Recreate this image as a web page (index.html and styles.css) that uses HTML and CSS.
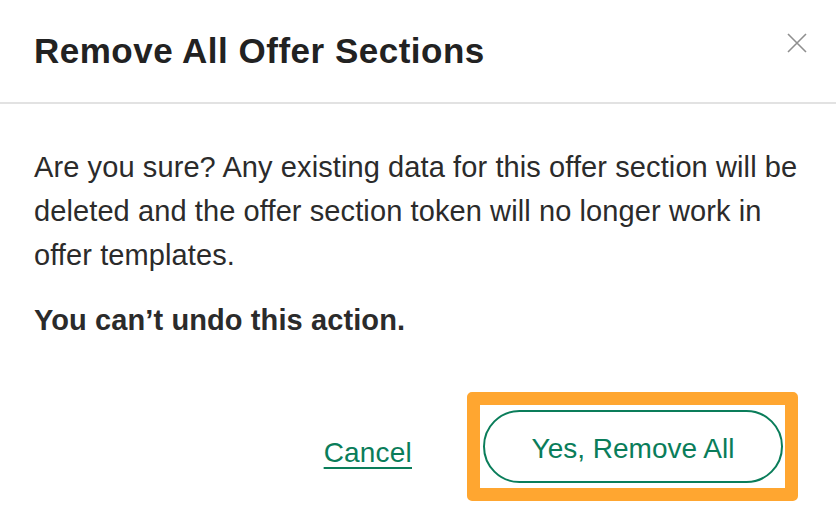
FILE: index.html
```html
<!DOCTYPE html>
<html>
<head>
<meta charset="utf-8">
<link rel="stylesheet" href="styles.css">
</head>
<body>
<div class="modal">
  <div class="modal-header">
    <h1 class="title">Remove All Offer Sections</h1>
    <button class="close" aria-label="Close">
      <svg width="20" height="20" viewBox="0 0 20 20"><path d="M1 1 L19 19 M19 1 L1 19" stroke="#8f8f8f" stroke-width="1.6" fill="none"/></svg>
    </button>
  </div>
  <div class="modal-body">
    <p class="text">Are you sure? Any existing data for this offer section will be deleted and the offer section token will no longer work in offer templates.</p>
    <p class="text strong">You can’t undo this action.</p>
  </div>
  <div class="modal-footer">
    <a class="cancel" href="#">Cancel</a>
    <div class="focus-ring">
      <button class="confirm">Yes, Remove All</button>
    </div>
  </div>
</div>
</body>
</html>
```
FILE: styles.css
```css
html, body {
  margin: 0;
  padding: 0;
  background: #ffffff;
}
body {
  font-family: "Liberation Sans", Arial, sans-serif;
  color: #2b2b2b;
}
.modal {
  width: 836px;
}
.modal-header {
  display: flex;
  justify-content: space-between;
  align-items: flex-start;
  padding: 31px 29px 31px 34px;
  border-bottom: 2px solid #e2e2e2;
}
.title {
  margin: 0;
  font-size: 35px;
  line-height: 40px;
  font-weight: 700;
  color: #222222;
  letter-spacing: 0.5px;
}
.close {
  margin-top: 2px;
  padding: 0;
  border: 0;
  background: none;
  width: 20px;
  height: 20px;
  display: block;
}
.close svg {
  display: block;
}
.modal-body {
  padding: 41px 34px 0 34px;
}
.text {
  margin: 0;
  font-size: 29px;
  line-height: 44px;
  color: #2b2b2b;
  letter-spacing: 0.1px;
}
.text.strong {
  margin-top: 21px;
  font-weight: 700;
}
.modal-footer {
  display: flex;
  justify-content: flex-end;
  align-items: center;
  gap: 55px;
  margin-top: 50px;
  padding-right: 38px;
}
.cancel {
  font-size: 28px;
  color: #0a7d5a;
  text-decoration: underline;
  text-decoration-thickness: 2px;
  text-underline-offset: 5px;
  margin-top: 12px;
  letter-spacing: 0.2px;
}
.focus-ring {
  border: 13px solid #ffa630;
  border-radius: 5px;
  padding: 5px 2px 5px 3px;
}
.confirm {
  display: block;
  width: 300px;
  height: 73px;
  border: 2px solid #0a7d5a;
  border-radius: 37px;
  background: #ffffff;
  color: #0a7d5a;
  font-family: "Liberation Sans", Arial, sans-serif;
  font-size: 28px;
  padding: 4px 0 0 0;
}
```
